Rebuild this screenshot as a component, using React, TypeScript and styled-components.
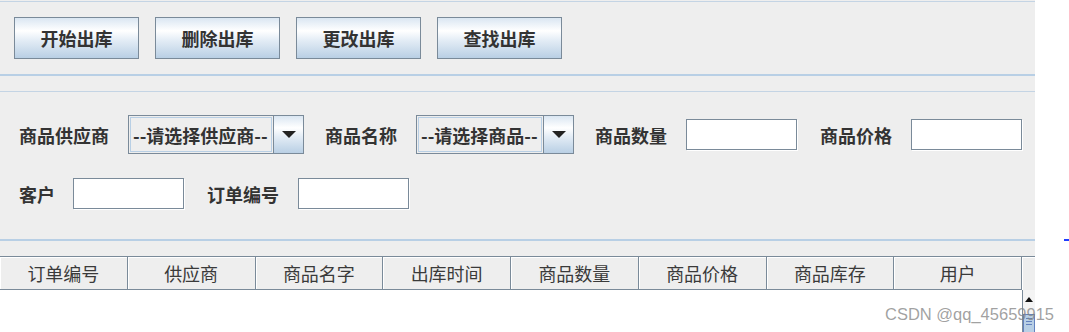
import React from "react";
import styled, { createGlobalStyle } from "styled-components";

const Global = createGlobalStyle`
  html, body { margin: 0; padding: 0; background: #ffffff; }
  body { font-family: "Noto Sans CJK SC", "Noto Sans", sans-serif; }
`;

const Page = styled.div`
  position: relative;
  width: 1069px;
  height: 332px;
  overflow: hidden;
  background: #ffffff;
`;

const Panel = styled.div`
  width: 1035px;
  height: 332px;
  background: #eeeeee;
  display: flex;
  flex-direction: column;
  overflow: hidden;
`;

const Toolbar = styled.div`
  margin-top: 1px;
  border-top: 1px solid #c4d4e4;
  display: flex;
  gap: 16px;
  padding: 15px 0 15px 14px;
`;

const metalGradient = `linear-gradient(to bottom, #dae6f2 0%, #ffffff 32%, #e4edf6 55%, #b9cfe4 100%)`;

const Button = styled.button`
  box-sizing: border-box;
  flex-shrink: 0;
  width: 125px;
  height: 42px;
  border: 1px solid #7a8a99;
  background: ${metalGradient};
  font-family: inherit;
  font-size: 18px;
  font-weight: 700;
  color: #333333;
  padding: 0;
  display: flex;
  align-items: center;
  justify-content: center;
`;

const ThickLine = styled.div`
  height: 2px;
  flex-shrink: 0;
  background: #b8cfe5;
`;

const ThinGap = styled.div`
  height: 15px;
  flex-shrink: 0;
  border-bottom: 1px solid #c4d4e4;
`;

const Form = styled.div`
  display: flex;
  flex-direction: column;
  gap: 24px;
  padding: 23px 0 30px 19px;
`;

const Row = styled.div<{ $h: number }>`
  display: flex;
  align-items: center;
  height: ${(p) => p.$h}px;
`;

const Label = styled.span<{ $gap?: number }>`
  flex-shrink: 0;
  font-size: 18px;
  font-weight: 700;
  color: #333333;
  margin-right: ${(p) => p.$gap ?? 19}px;
  white-space: nowrap;
  line-height: 1;
`;

const Combo = styled.div<{ $w: number }>`
  box-sizing: border-box;
  flex-shrink: 0;
  width: ${(p) => p.$w}px;
  height: 39px;
  border: 1px solid #7a8a99;
  display: flex;
  margin-right: 21px;
`;

const ComboText = styled.div`
  flex: 1;
  margin: 1px;
  border: 1px solid #b8cfe5;
  background: #eeeeee;
  display: flex;
  align-items: center;
  padding-left: 2px;
  font-size: 18px;
  font-weight: 700;
  color: #333333;
  white-space: nowrap;
  overflow: hidden;
`;

const ComboArrow = styled.div`
  width: 29px;
  flex-shrink: 0;
  border-left: 1px solid #7a8a99;
  background: ${metalGradient};
  display: flex;
  align-items: center;
  justify-content: center;
`;

const Triangle = styled.div`
  width: 0;
  height: 0;
  border-left: 7.5px solid transparent;
  border-right: 7.5px solid transparent;
  border-top: 7px solid #222222;
`;

const Field = styled.div`
  box-sizing: border-box;
  flex-shrink: 0;
  width: 111px;
  height: 31px;
  border: 1px solid #7a8a99;
  background: #ffffff;
  box-shadow: 1px 1px 0 #ffffff;
  margin-right: 23px;
`;

const TableHeader = styled.div`
  margin-top: 15px;
  display: flex;
  height: 34px;
  flex-shrink: 0;
`;

const HeaderCells = styled.div`
  width: 1022px;
  flex-shrink: 0;
  display: grid;
  grid-template-columns: repeat(8, 1fr);
`;

const HeaderCell = styled.div`
  box-sizing: border-box;
  border-top: 1px solid #7a8a99;
  border-right: 1px solid #7a8a99;
  border-bottom: 1px solid #7a8a99;
  box-shadow: inset 1px 1px 0 #ffffff;
  display: flex;
  align-items: center;
  justify-content: center;
  font-size: 18px;
  color: #3a3a3a;
  background: #eeeeee;
`;

const Corner = styled.div`
  flex: 1;
  border-top: 1px solid #7a8a99;
  box-shadow: inset 1px 1px 0 #ffffff;
`;

const Body = styled.div`
  flex: 1;
  display: flex;
`;

const BodyWhite = styled.div`
  width: 1022px;
  flex-shrink: 0;
  background: #ffffff;
`;

const ScrollBar = styled.div`
  flex: 1;
  border-left: 1px solid #7a8a99;
  background: #f4f4f4;
  display: flex;
  flex-direction: column;
  align-items: center;
`;

const UpArrow = styled.div`
  margin-top: 7px;
  width: 0;
  height: 0;
  border-left: 4px solid transparent;
  border-right: 4px solid transparent;
  border-bottom: 5px solid #111111;
`;

const Thumb = styled.div`
  margin-top: 12px;
  width: 10px;
  flex: 1;
  background: #b8cfe5;
  border: 1px solid #6382bf;
  border-bottom: none;
  display: flex;
  flex-direction: column;
  align-items: center;
  padding-top: 3px;
  gap: 2px;
`;

const Grip = styled.div`
  width: 6px;
  height: 1px;
  background: #6382bf;
`;

const Watermark = styled.div`
  position: absolute;
  left: 885px;
  top: 306px;
  font-family: "Liberation Sans", Arial, sans-serif;
  font-size: 16.5px;
  line-height: 1;
  color: rgba(130, 130, 130, 0.75);
  white-space: nowrap;
`;

const BlueDash = styled.div`
  position: absolute;
  left: 1064px;
  top: 239px;
  width: 5px;
  height: 2px;
  background: #1f3dff;
`;

const buttons = ["开始出库", "删除出库", "更改出库", "查找出库"];
const headers = ["订单编号", "供应商", "商品名字", "出库时间", "商品数量", "商品价格", "商品库存", "用户"];

export default function App() {
  return (
    <Page>
      <Global />
      <Panel>
        <Toolbar>
          {buttons.map((b) => (
            <Button key={b}>{b}</Button>
          ))}
        </Toolbar>
        <ThickLine />
        <ThinGap />
        <Form>
          <Row $h={39}>
            <Label>商品供应商</Label>
            <Combo $w={176}>
              <ComboText>--请选择供应商--</ComboText>
              <ComboArrow>
                <Triangle />
              </ComboArrow>
            </Combo>
            <Label>商品名称</Label>
            <Combo $w={158}>
              <ComboText>--请选择商品--</ComboText>
              <ComboArrow>
                <Triangle />
              </ComboArrow>
            </Combo>
            <Label>商品数量</Label>
            <Field />
            <Label>商品价格</Label>
            <Field />
          </Row>
          <Row $h={31}>
            <Label $gap={18}>客户</Label>
            <Field />
            <Label>订单编号</Label>
            <Field />
          </Row>
        </Form>
        <ThickLine />
        <TableHeader>
          <HeaderCells>
            {headers.map((h) => (
              <HeaderCell key={h}>{h}</HeaderCell>
            ))}
          </HeaderCells>
          <Corner />
        </TableHeader>
        <Body>
          <BodyWhite />
          <ScrollBar>
            <UpArrow />
            <Thumb>
              <Grip />
              <Grip />
              <Grip />
            </Thumb>
          </ScrollBar>
        </Body>
      </Panel>
      <BlueDash />
      <Watermark>CSDN @qq_45659915</Watermark>
    </Page>
  );
}
